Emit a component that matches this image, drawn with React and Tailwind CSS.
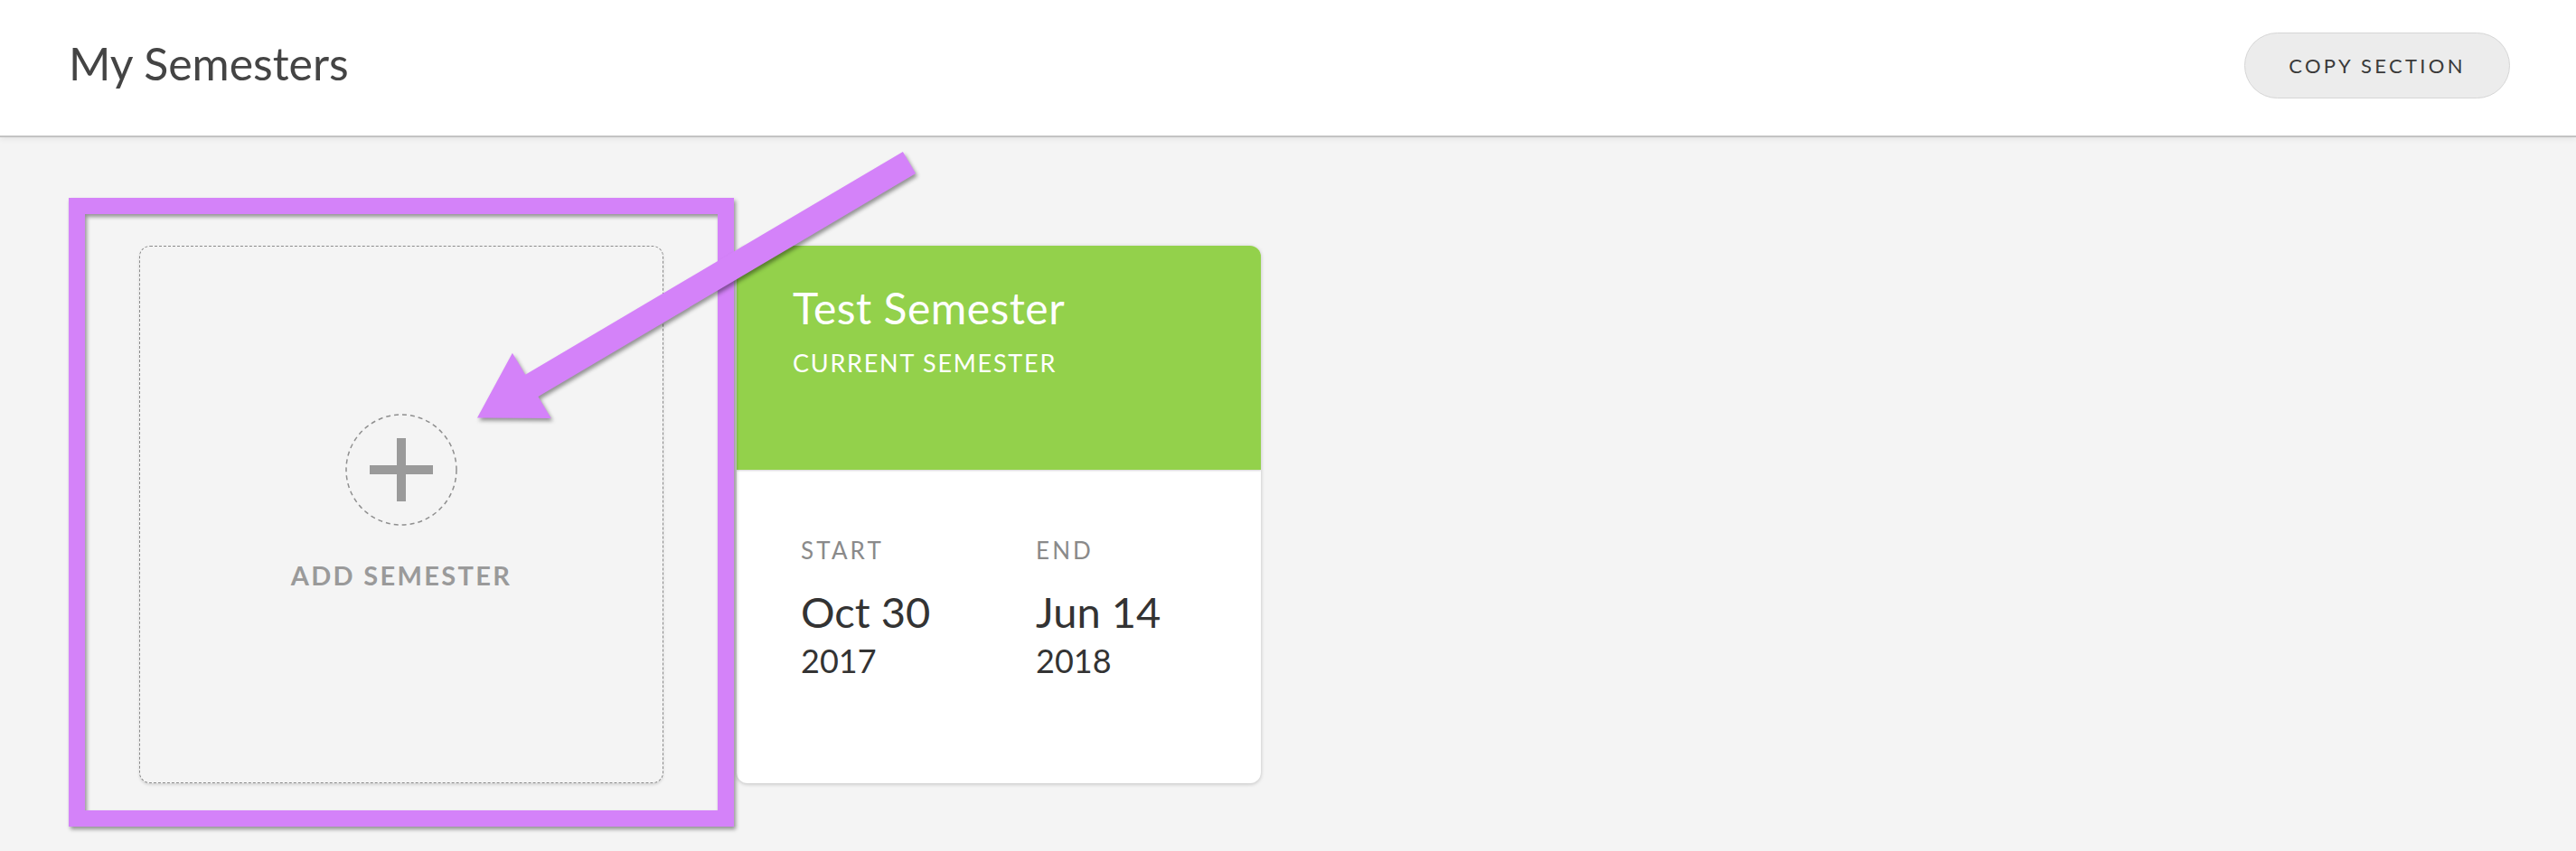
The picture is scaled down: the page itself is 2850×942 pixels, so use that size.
import React from 'react';

const SemesterCard = ({ name, status, start, end }) => (
  <div className="w-[580px] h-[595px] bg-white rounded-[12px] overflow-hidden shadow-[0_1px_4px_rgba(0,0,0,0.22)] flex flex-col">
    {/* green top */}
    <div className="h-[248px] shrink-0 bg-[#93d14b] pl-[62px] pt-[45px] shadow-[0_1px_2px_rgba(0,0,0,0.18)] relative">
      <div className="text-[48px] leading-none text-white tracking-[0.01em]">{name}</div>
      <div className="mt-[23px] text-[27px] leading-none text-white tracking-[0.065em]">{status}</div>
    </div>
    {/* dates */}
    <div className="flex pl-[71px] pt-[76px]">
      <div className="w-[260px]">
        <div className="text-[26px] leading-none text-[#8a8a8a] tracking-[0.12em]">START</div>
        <div className="mt-[32px] text-[47px] leading-none text-[#333]">{start.day}</div>
        <div className="mt-[12px] text-[36px] leading-none text-[#333]">{start.year}</div>
      </div>
      <div>
        <div className="text-[26px] leading-none text-[#8a8a8a] tracking-[0.12em]">END</div>
        <div className="mt-[32px] text-[47px] leading-none text-[#333]">{end.day}</div>
        <div className="mt-[12px] text-[36px] leading-none text-[#333]">{end.year}</div>
      </div>
    </div>
  </div>
);

const AddSemesterCard = () => (
  <button className="w-[580px] h-[595px] rounded-[12px] border border-dashed border-[#8c8c8c] bg-[#f4f4f4] shadow-[0_2px_3px_rgba(0,0,0,0.12)] flex flex-col items-center pt-[185px]">
    <div className="w-[124px] h-[124px] flex items-center justify-center relative">
      <svg className="absolute inset-0" width="124" height="124" viewBox="0 0 124 124">
        <circle cx="62" cy="62" r="61" fill="none" stroke="#8f8f8f" strokeWidth="1.5" strokeDasharray="5 4" />
      </svg>
      <span className="absolute w-[70px] h-[10px] bg-[#9a9a9a]" />
      <span className="absolute w-[10px] h-[70px] bg-[#9a9a9a]" />
    </div>
    <div className="mt-[40px] text-[29px] leading-none font-bold text-[#9a9a9a] tracking-[0.08em]">ADD SEMESTER</div>
  </button>
);

export default function App() {
  return (
    <div className="relative min-h-screen bg-[#f4f4f4] font-['Lato',sans-serif] overflow-hidden">
      {/* Header */}
      <header className="h-[152px] bg-white border-b-2 border-[#c3c3c3] shadow-[0_2px_6px_rgba(0,0,0,0.07)] flex items-center justify-between pl-[76px] pr-[73px]">
        <h1 className="text-[50px] leading-none text-[#444] mb-[11px]">My Semesters</h1>
        <button className="w-[294px] h-[73px] mb-[5px] rounded-full bg-[#ececec] border border-[#d6d6d6] text-[22px] text-[#3a3a3a] tracking-[0.15em]">
          COPY SECTION
        </button>
      </header>

      {/* Semesters */}
      <main className="flex gap-[81px] pl-[154px] pt-[120px]">
        <AddSemesterCard />
        <SemesterCard
          name="Test Semester"
          status="CURRENT SEMESTER"
          start={{ day: 'Oct 30', year: '2017' }}
          end={{ day: 'Jun 14', year: '2018' }}
        />
      </main>

      {/* Annotation: highlight frame */}
      <div className="absolute left-[76px] top-[219px] w-[736px] h-[696px] border-[18px] border-[#d482f9] drop-shadow-[2px_3px_2px_rgba(0,0,0,0.4)] pointer-events-none" />

      {/* Annotation: arrow */}
      <svg
        className="absolute left-0 top-0 pointer-events-none drop-shadow-[2px_3px_2px_rgba(0,0,0,0.4)]"
        width="1100"
        height="520"
        viewBox="0 0 1100 520"
      >
        <polygon
          points="998.9,167.9 1013.1,192.1 595.4,439 609.7,463.1 528,462.5 566.9,390.7 581.2,414.8"
          fill="#d482f9"
        />
      </svg>
    </div>
  );
}
